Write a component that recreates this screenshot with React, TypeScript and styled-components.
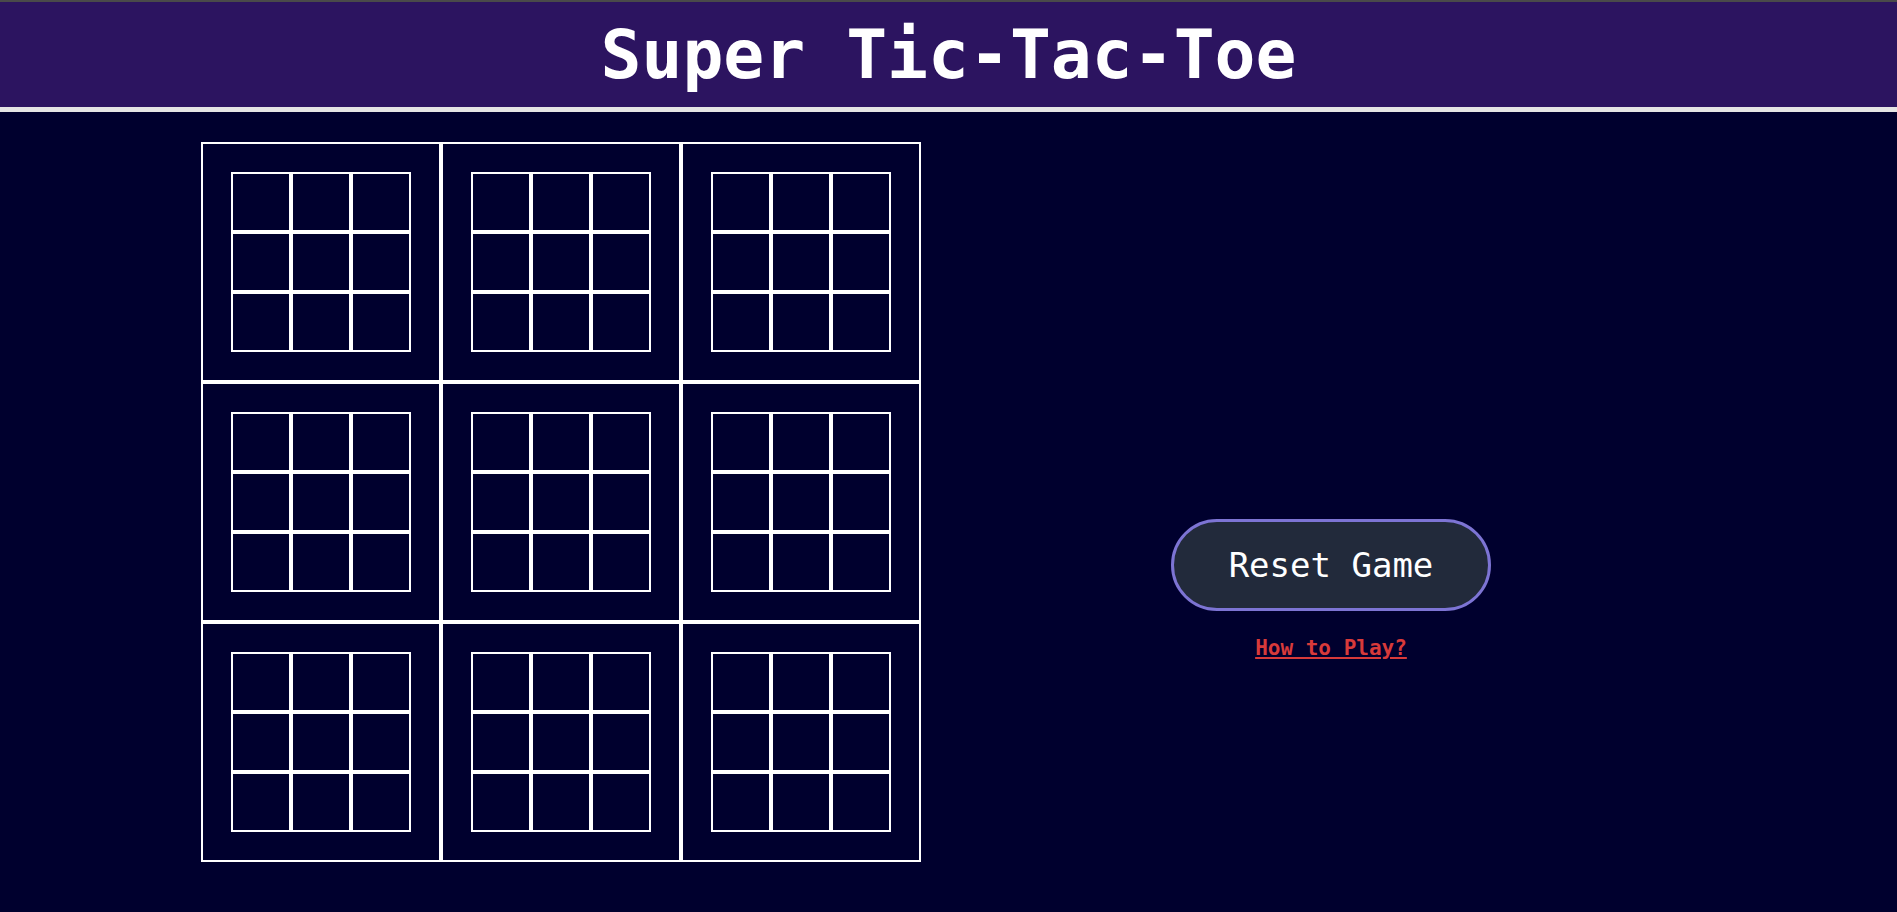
import React from 'react';
import styled, { createGlobalStyle } from 'styled-components';

const GlobalStyle = createGlobalStyle`
  html, body {
    margin: 0;
    padding: 0;
    background: #00002e;
  }

  body {
    font-family: "DejaVu Sans Mono", "Liberation Mono", monospace;
    min-height: 912px;
  }
`;

const Header = styled.header`
  background: #2c1460;
  border-top: 2px solid #4a4a4a;
  border-bottom: 5px solid #e4e4e4;
  height: 105px;
  display: flex;
  align-items: center;
  justify-content: center;
`;

const Title = styled.h1`
  margin: 0;
  color: #fff;
  font-size: 68px;
  font-weight: bold;
  letter-spacing: 0;
`;

const Main = styled.main`
  display: flex;
  align-items: stretch;
  padding: 30px 0 0 201px;
`;

const Board = styled.div`
  display: grid;
  grid-template-columns: repeat(3, 240px);
  grid-template-rows: repeat(3, 240px);
`;

const BigCell = styled.div`
  box-sizing: border-box;
  border: 2px solid #fff;
  display: flex;
  align-items: center;
  justify-content: center;
`;

const SmallGrid = styled.div`
  display: grid;
  grid-template-columns: repeat(3, 60px);
  grid-template-rows: repeat(3, 60px);
`;

const SmallCell = styled.button`
  box-sizing: border-box;
  border: 2px solid #fff;
  background: transparent;
  padding: 0;
  cursor: pointer;
`;

const Panel = styled.div`
  width: 820px;
  display: flex;
  flex-direction: column;
  align-items: center;
  justify-content: center;
  padding-top: 175px;
  gap: 25px;
`;

const ResetButton = styled.button`
  box-sizing: border-box;
  width: 320px;
  height: 92px;
  border-radius: 46px;
  border: 3px solid #7d74d4;
  background: #222a3b;
  color: #fff;
  font-family: "DejaVu Sans Mono", "Liberation Mono", monospace;
  font-size: 34px;
  cursor: pointer;
`;

const HelpLink = styled.a`
  color: #d83a3a;
  font-size: 21px;
  font-weight: bold;
  text-decoration: underline;
  cursor: pointer;
`;

const cells = Array.from({ length: 9 }, (_, i) => i);

const App: React.FC = () => {
  return (
    <>
      <GlobalStyle />
      <Header>
        <Title>Super Tic-Tac-Toe</Title>
      </Header>
      <Main>
        <Board>
          {cells.map((b) => (
            <BigCell key={b}>
              <SmallGrid>
                {cells.map((c) => (
                  <SmallCell key={c} />
                ))}
              </SmallGrid>
            </BigCell>
          ))}
        </Board>
        <Panel>
          <ResetButton>Reset Game</ResetButton>
          <HelpLink>How to Play?</HelpLink>
        </Panel>
      </Main>
    </>
  );
};

export default App;
